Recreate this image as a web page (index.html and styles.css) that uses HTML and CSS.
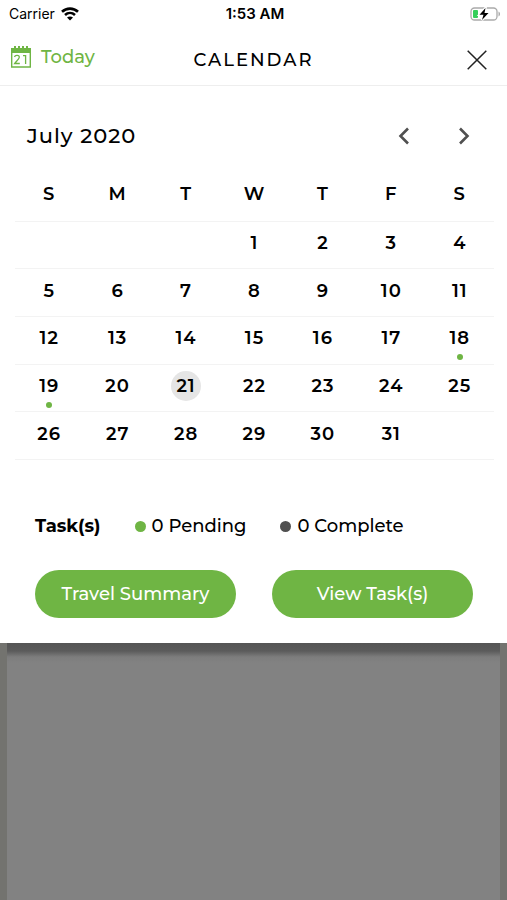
FILE: index.html
```html
<!DOCTYPE html>
<html lang="en">
<head>
<meta charset="utf-8">
<meta name="viewport" content="width=device-width, initial-scale=1">
<title>Calendar</title>
<link rel="stylesheet" href="styles.css">
</head>
<body>
<main class="sheet">
  <div class="status">
    <div class="carrier">
      <span>Carrier</span>
      <svg width="18" height="14" viewBox="0 0 18 14" fill="none" stroke="#000" stroke-width="2.6" aria-hidden="true">
        <path d="M1 4.8C5.5.5 12.500.5 17 4.800M4 8c2.900-2.700 7.100-2.700 10 0"/>
        <path d="M9 13.500 6 10.600c1.700-1.500 4.300-1.500 6 0z" fill="#000" stroke="none"/>
      </svg>
    </div>
    <span class="clock">1:53 AM</span>
    <svg class="battery" width="31" height="14" viewBox="0 0 31 14" aria-hidden="true">
      <rect x="1" y="1" width="26" height="12" rx="3.500" fill="#fff" stroke="#aaa" stroke-width="1.300"/>
      <path d="M28.500 4.500c2 .8 2 4.200 0 5z" fill="#aaa"/>
      <rect x="3" y="3" width="5" height="8" rx="1" fill="#35cf5b"/>
      <path d="M15.500 1 9.500 7.800h4L12 13l6.500-7h-4z" fill="#000" stroke="#fff" stroke-width="2.500" paint-order="stroke"/>
    </svg>
  </div>
  <header class="header">
    <button class="today" type="button">
      <svg width="22" height="22" viewBox="0 0 22 22" aria-hidden="true">
        <path d="M1 2h20v5H1z" fill="#6fb544"/>
        <path d="M5 0v3M9 0v3M13 0v3M17 0v3" stroke="#6fb544" stroke-width="2"/>
        <path d="M1.700 6v15h18.600V6" fill="none" stroke="#6fb544" stroke-width="1.400"/>
        <path d="M4.500 11c.6-2.400 5-2.200 4.800.3-.1 1.700-3.100 3.900-4.700 6.200h5.200M13 9.700h2.600v8.300" fill="none" stroke="#6fb544" stroke-width="1.300"/>
      </svg>
      <span>Today</span>
    </button>
    <h1 class="title">CALENDAR</h1>
    <button class="close" type="button" aria-label="Close">
      <svg width="20" height="20" viewBox="0 0 20 20" fill="none" stroke="#222" stroke-width="1.500" aria-hidden="true"><path d="m.7.7 18.600 18.600M19.300.7.7 19.300"/></svg>
    </button>
  </header>
  <section class="month">
    <h2 class="month-name">July 2020</h2>
    <div class="arrows">
      <button type="button" aria-label="Previous month"><svg width="12" height="18" viewBox="0 0 12 18" fill="none" stroke="#505050" stroke-width="2.600" aria-hidden="true"><path d="m10 1.500-7.500 7.500 7.500 7.500"/></svg></button>
      <button type="button" aria-label="Next month"><svg width="12" height="18" viewBox="0 0 12 18" fill="none" stroke="#505050" stroke-width="2.600" aria-hidden="true"><path d="m2 1.500 7.500 7.500-7.500 7.500"/></svg></button>
    </div>
  </section>
  <table class="days">
    <thead><tr><th>S</th><th>M</th><th>T</th><th>W</th><th>T</th><th>F</th><th>S</th></tr></thead>
    <tbody>
      <tr><td></td><td></td><td></td><td>1</td><td>2</td><td>3</td><td>4</td></tr>
      <tr><td>5</td><td>6</td><td>7</td><td>8</td><td>9</td><td>10</td><td>11</td></tr>
      <tr><td>12</td><td>13</td><td>14</td><td>15</td><td>16</td><td>17</td><td><span class="day marked">18</span></td></tr>
      <tr><td><span class="day marked">19</span></td><td>20</td><td><span class="day current">21</span></td><td>22</td><td>23</td><td>24</td><td>25</td></tr>
      <tr><td>26</td><td>27</td><td>28</td><td>29</td><td>30</td><td>31</td><td></td></tr>
    </tbody>
  </table>
  <section class="tasks">
    <strong class="tasks-label">Task(s)</strong>
    <span class="count pending">0 Pending</span>
    <span class="count complete">0 Complete</span>
  </section>
  <div class="actions">
    <button type="button">Travel Summary</button>
    <button type="button">View Task(s)</button>
  </div>
</main>
<div class="backdrop"></div>
</body>
</html>
```
FILE: styles.css
```css
* {
  box-sizing: border-box;
}

body {
  margin: 0;
  min-height: 100vh;
  display: flex;
  flex-direction: column;
  background: #828282;
  color: #000;
  font-family: Montserrat, Inter, sans-serif;
  font-size: 18px;
  font-weight: 500;
  line-height: 24px;
}

button {
  border: 0;
  padding: 0;
  background: none;
  color: inherit;
  font: inherit;
  cursor: pointer;
}

svg {
  display: block;
}

h1,
h2 {
  margin: 0;
  font-weight: 500;
}

.sheet {
  background: #fff;
  padding-bottom: 25px;
}

.status {
  display: grid;
  grid-template-columns: 1fr auto 1fr;
  align-items: center;
  height: 28px;
  padding: 0 6px 0 9px;
  font-family: Inter, sans-serif;
  font-size: 14px;
  font-weight: 400;
}

.carrier {
  display: flex;
  align-items: center;
  gap: 6px;
}

.clock {
  font-size: 15px;
  font-weight: 600;
}

.battery {
  justify-self: end;
}

.header {
  display: grid;
  grid-template-columns: 1fr auto 1fr;
  align-items: center;
  height: 58px;
  padding: 6px 20px 0 10px;
  border-bottom: 1px solid #eee;
}

.today {
  display: flex;
  align-items: center;
  gap: 9px;
  padding-bottom: 6px;
  color: #6fb544;
}

.title {
  padding-left: 10px;
  font-size: 18px;
  letter-spacing: 2px;
}

.close {
  justify-self: end;
}

.month {
  display: flex;
  align-items: center;
  justify-content: space-between;
  padding: 38px 37px 20px 27px;
}

.month-name {
  font-size: 21px;
  letter-spacing: 1px;
}

.arrows {
  display: flex;
  gap: 48px;
}

.days {
  width: calc(100% - 28px);
  height: 292px;
  margin: 0 13px 0 15px;
  border-collapse: collapse;
  table-layout: fixed;
  letter-spacing: 1px;
}

.days th,
.days td {
  height: 47px;
  padding: 0;
  border-bottom: 1px solid #f3f3f3;
  font-weight: 600;
  text-align: center;
}

.days th {
  height: 53px;
}

.days td {
  padding-bottom: 4px;
}

.day {
  position: relative;
  display: block;
  width: 30px;
  margin: 0 auto;
  line-height: 30px;
}

.current {
  border-radius: 50%;
  background: #e5e5e5;
}

.marked::after {
  content: "";
  position: absolute;
  left: 12px;
  bottom: -7px;
  width: 6px;
  height: 6px;
  border-radius: 50%;
  background: #6fb544;
}

.tasks {
  display: flex;
  align-items: center;
  padding: 54px 35px 0;
  gap: 34px;
}

.tasks-label {
  font-weight: 700;
}

.count {
  display: flex;
  align-items: center;
  gap: 6px;
}

.count::before {
  content: "";
  width: 11px;
  height: 11px;
  border-radius: 50%;
}

.pending::before {
  background: #6fb544;
}

.complete::before {
  background: #505050;
}

.actions {
  display: grid;
  grid-template-columns: 1fr 1fr;
  gap: 36px;
  padding: 32px 34px 0 35px;
}

.actions button {
  height: 48px;
  border-radius: 24px;
  background: #6fb544;
  color: #fff;
}

.backdrop {
  flex: 1;
  border: solid #73736f;
  border-width: 0 7px;
  background: linear-gradient(#555, #5b5b5b 8px, #7d7d7d 14px, #828282 20px);
}
```
